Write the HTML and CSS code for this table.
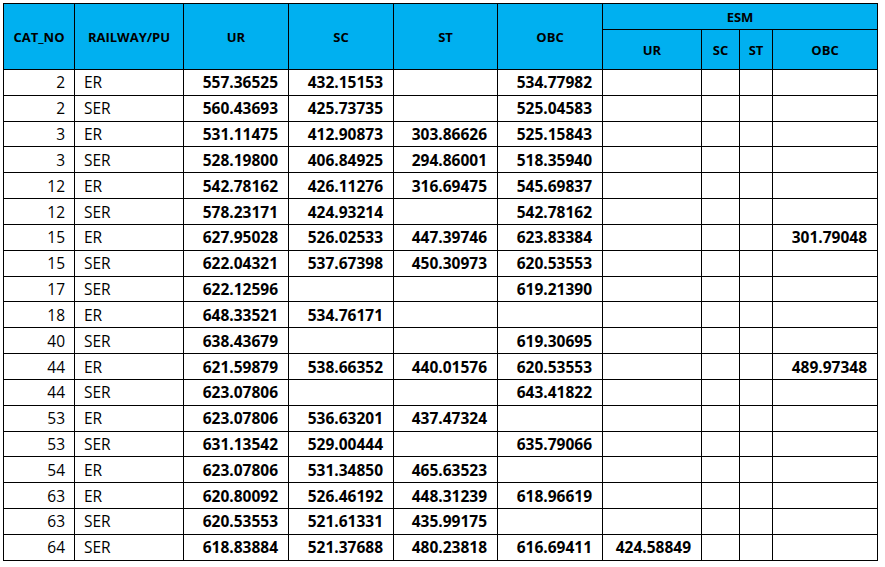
FILE: index.html
```html
<!DOCTYPE html>
<html>
<head>
<meta charset="utf-8">
<link rel="stylesheet" href="styles.css">
</head>
<body>
<table class="grid">
<colgroup>
<col class="c-cat"><col class="c-rail"><col class="c-num"><col class="c-num"><col class="c-st"><col class="c-num"><col class="c-eur"><col class="c-esc"><col class="c-est"><col class="c-num">
</colgroup>
<thead>
<tr class="h1">
<th rowspan="2">CAT_NO</th>
<th rowspan="2">RAILWAY/PU</th>
<th rowspan="2">UR</th>
<th rowspan="2">SC</th>
<th rowspan="2">ST</th>
<th rowspan="2">OBC</th>
<th colspan="4">ESM</th>
</tr>
<tr class="h2">
<th>UR</th><th>SC</th><th>ST</th><th>OBC</th>
</tr>
</thead>
<tbody>
<tr><td class="cat">2</td><td class="rail">ER</td><td class="n">557.36525</td><td class="n">432.15153</td><td></td><td class="n">534.77982</td><td></td><td></td><td></td><td></td></tr>
<tr><td class="cat">2</td><td class="rail">SER</td><td class="n">560.43693</td><td class="n">425.73735</td><td></td><td class="n">525.04583</td><td></td><td></td><td></td><td></td></tr>
<tr><td class="cat">3</td><td class="rail">ER</td><td class="n">531.11475</td><td class="n">412.90873</td><td class="n">303.86626</td><td class="n">525.15843</td><td></td><td></td><td></td><td></td></tr>
<tr><td class="cat">3</td><td class="rail">SER</td><td class="n">528.19800</td><td class="n">406.84925</td><td class="n">294.86001</td><td class="n">518.35940</td><td></td><td></td><td></td><td></td></tr>
<tr><td class="cat">12</td><td class="rail">ER</td><td class="n">542.78162</td><td class="n">426.11276</td><td class="n">316.69475</td><td class="n">545.69837</td><td></td><td></td><td></td><td></td></tr>
<tr><td class="cat">12</td><td class="rail">SER</td><td class="n">578.23171</td><td class="n">424.93214</td><td></td><td class="n">542.78162</td><td></td><td></td><td></td><td></td></tr>
<tr><td class="cat">15</td><td class="rail">ER</td><td class="n">627.95028</td><td class="n">526.02533</td><td class="n">447.39746</td><td class="n">623.83384</td><td></td><td></td><td></td><td class="n">301.79048</td></tr>
<tr><td class="cat">15</td><td class="rail">SER</td><td class="n">622.04321</td><td class="n">537.67398</td><td class="n">450.30973</td><td class="n">620.53553</td><td></td><td></td><td></td><td></td></tr>
<tr><td class="cat">17</td><td class="rail">SER</td><td class="n">622.12596</td><td></td><td></td><td class="n">619.21390</td><td></td><td></td><td></td><td></td></tr>
<tr><td class="cat">18</td><td class="rail">ER</td><td class="n">648.33521</td><td class="n">534.76171</td><td></td><td></td><td></td><td></td><td></td><td></td></tr>
<tr><td class="cat">40</td><td class="rail">SER</td><td class="n">638.43679</td><td></td><td></td><td class="n">619.30695</td><td></td><td></td><td></td><td></td></tr>
<tr><td class="cat">44</td><td class="rail">ER</td><td class="n">621.59879</td><td class="n">538.66352</td><td class="n">440.01576</td><td class="n">620.53553</td><td></td><td></td><td></td><td class="n">489.97348</td></tr>
<tr><td class="cat">44</td><td class="rail">SER</td><td class="n">623.07806</td><td></td><td></td><td class="n">643.41822</td><td></td><td></td><td></td><td></td></tr>
<tr><td class="cat">53</td><td class="rail">ER</td><td class="n">623.07806</td><td class="n">536.63201</td><td class="n">437.47324</td><td></td><td></td><td></td><td></td><td></td></tr>
<tr><td class="cat">53</td><td class="rail">SER</td><td class="n">631.13542</td><td class="n">529.00444</td><td></td><td class="n">635.79066</td><td></td><td></td><td></td><td></td></tr>
<tr><td class="cat">54</td><td class="rail">ER</td><td class="n">623.07806</td><td class="n">531.34850</td><td class="n">465.63523</td><td></td><td></td><td></td><td></td><td></td></tr>
<tr><td class="cat">63</td><td class="rail">ER</td><td class="n">620.80092</td><td class="n">526.46192</td><td class="n">448.31239</td><td class="n">618.96619</td><td></td><td></td><td></td><td></td></tr>
<tr><td class="cat">63</td><td class="rail">SER</td><td class="n">620.53553</td><td class="n">521.61331</td><td class="n">435.99175</td><td></td><td></td><td></td><td></td><td></td></tr>
<tr><td class="cat">64</td><td class="rail">SER</td><td class="n">618.83884</td><td class="n">521.37688</td><td class="n">480.23818</td><td class="n">616.69411</td><td class="n">424.58849</td><td></td><td></td><td></td></tr>
</tbody>
</table>
</body>
</html>
```
FILE: styles.css
```css
html, body {
  margin: 0;
  padding: 0;
  background: #ffffff;
}
body {
  padding: 3px 0 0 3px;
  font-family: "Open Sans", "Noto Sans", sans-serif;
  color: #000;
}
.grid {
  border-collapse: collapse;
  table-layout: fixed;
  width: 875px;
}
.c-cat { width: 71px; }
.c-rail { width: 109px; }
.c-num { width: 105px; }
.c-st { width: 104px; }
.c-eur { width: 99px; }
.c-esc { width: 38px; }
.c-est { width: 33px; }
.grid th, .grid td {
  border: 1px solid #000;
  padding: 0;
  overflow: hidden;
  white-space: nowrap;
}
.grid th {
  background: #00b0f0;
  font-size: 13px;
  font-weight: 700;
  text-align: center;
  vertical-align: middle;
}
.h1 { height: 26px; }
.h2 { height: 40px; }
.grid tbody tr { height: 25.84px; }
.grid td {
  font-size: 15.5px;
  line-height: 18px;
  vertical-align: middle;
}
.cat { text-align: right; padding-right: 9px !important; }
.rail { text-align: left; padding-left: 9px !important; }
.n { text-align: right; font-weight: 700; padding-right: 10px !important; }
```
